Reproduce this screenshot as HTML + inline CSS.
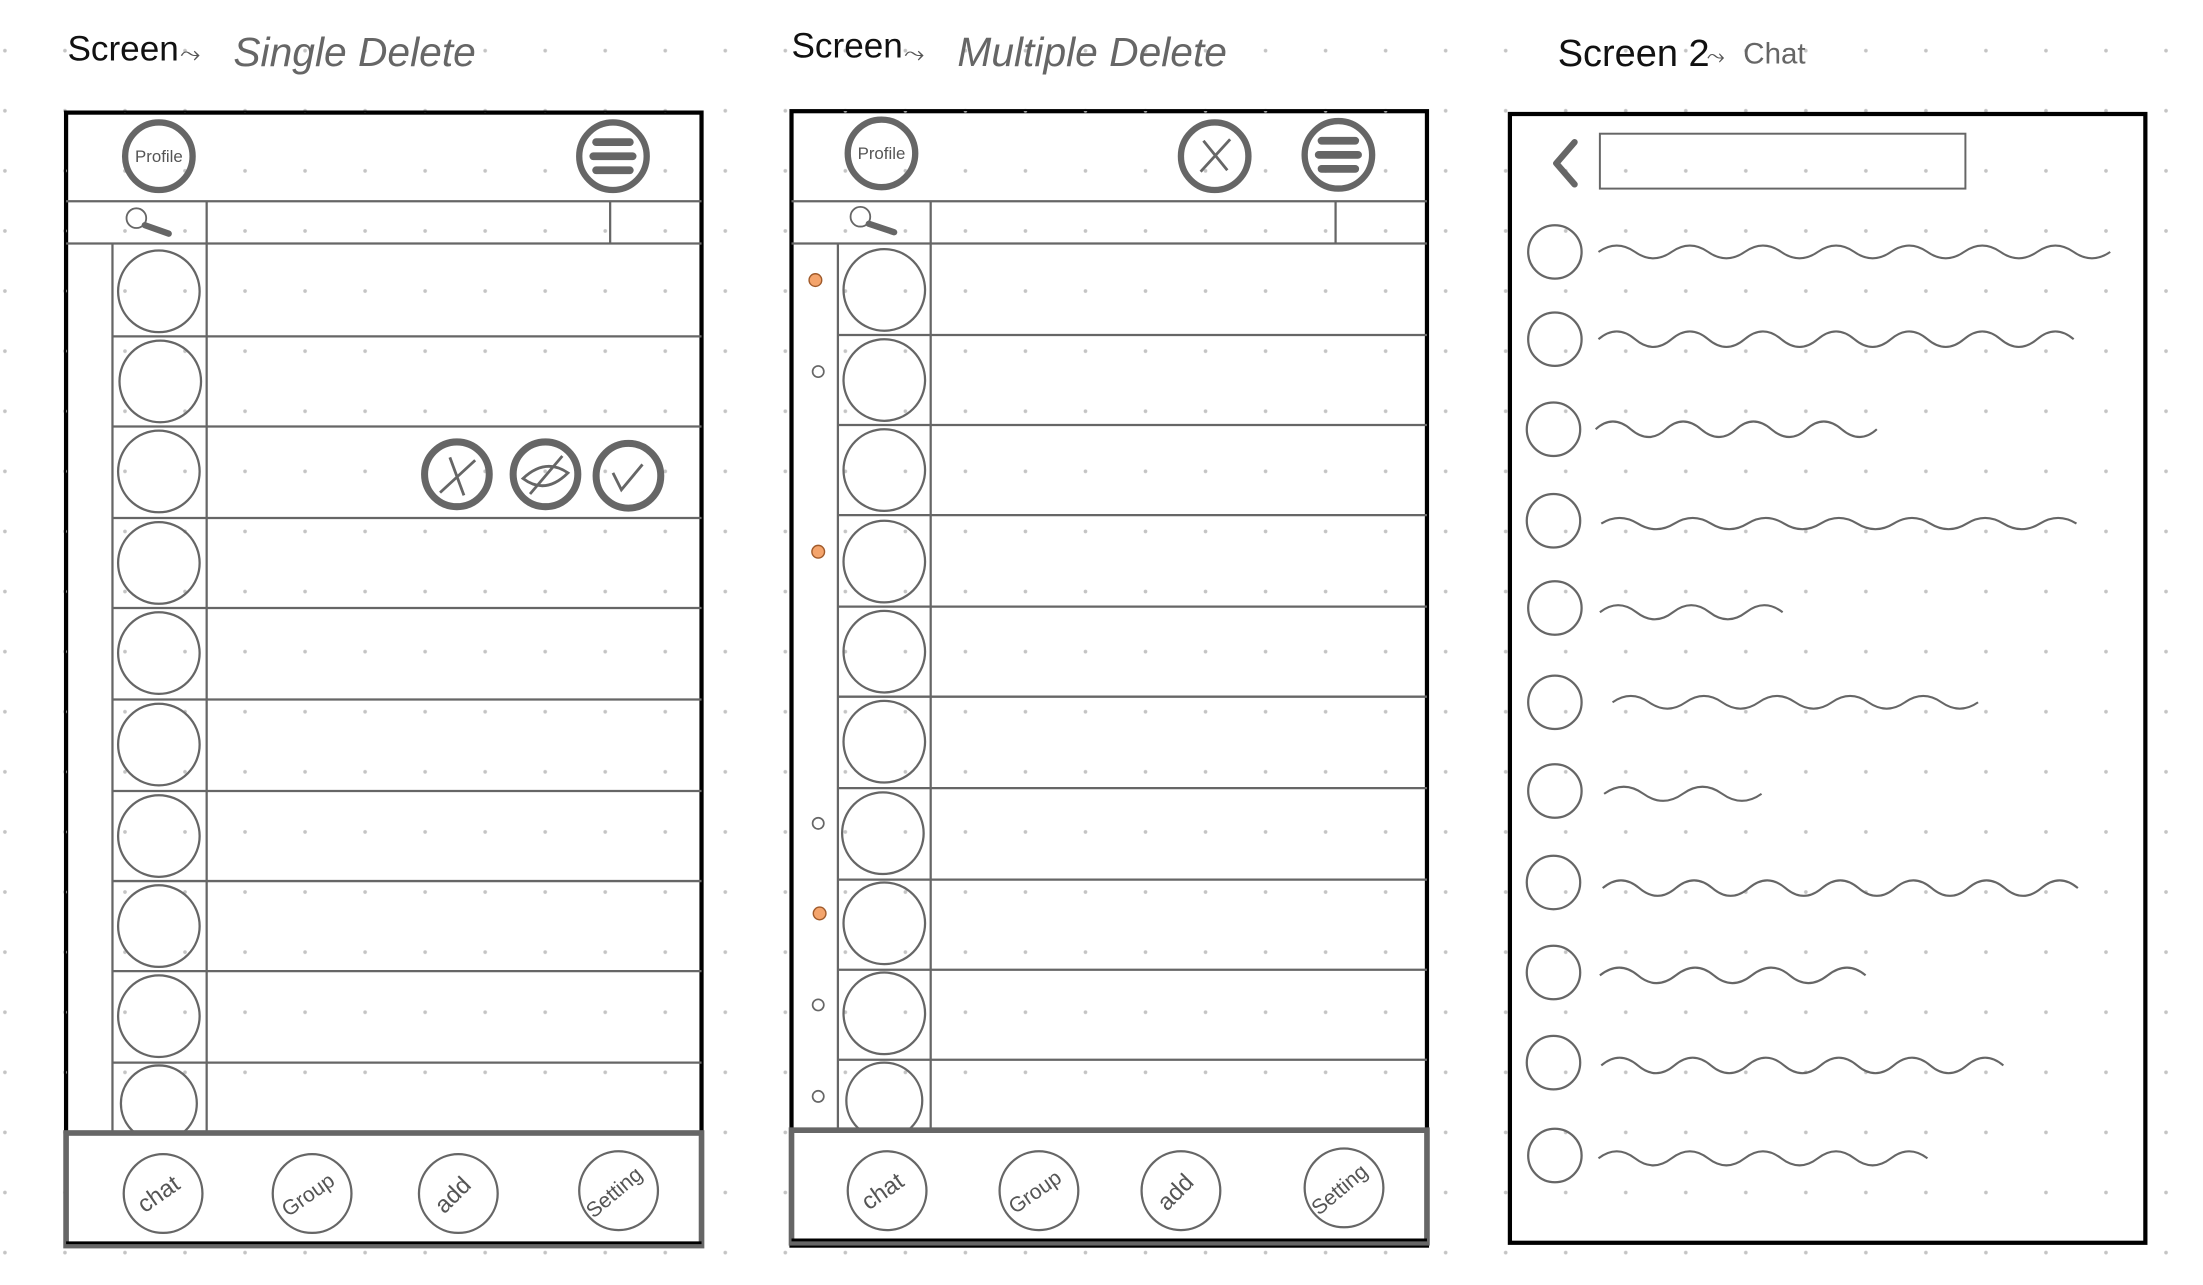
<!DOCTYPE html>
<html><head><meta charset="utf-8"><style>
html,body{margin:0;padding:0;background:#fff;width:2203px;height:1285px;overflow:hidden}
svg{display:block}
text{font-family:"Liberation Sans",sans-serif}
</style></head><body>
<svg width="2203" height="1285" viewBox="0 0 1567 913" preserveAspectRatio="none" xmlns="http://www.w3.org/2000/svg">
<defs>
<pattern id="dots" x="3.5" y="36" width="42.7" height="42.7" patternUnits="userSpaceOnUse">
<circle cx="0" cy="0" r="1.3" fill="#c4c4c4"/><circle cx="42.7" cy="0" r="1.3" fill="#c4c4c4"/><circle cx="0" cy="42.7" r="1.3" fill="#c4c4c4"/><circle cx="42.7" cy="42.7" r="1.3" fill="#c4c4c4"/>
</pattern>
</defs>
<rect width="1567" height="913" fill="url(#dots)"/>

<!-- titles -->
<text x="48" y="43" font-size="25" fill="#111">Screen</text>
<text x="128" y="44" font-size="18" fill="#555">⤳</text>
<text x="166" y="47" font-size="29" fill="#666" font-style="italic">Single Delete</text>
<text x="563" y="41" font-size="25" fill="#111">Screen</text>
<text x="643" y="44" font-size="18" fill="#555">⤳</text>
<text x="681" y="47" font-size="29" fill="#666" font-style="italic">Multiple Delete</text>
<text x="1108" y="47" font-size="27" fill="#111">Screen 2</text>
<text x="1214" y="45" font-size="16" fill="#555">⤳</text>
<text x="1240" y="45" font-size="21" fill="#666">Chat</text>

<!-- ============ SCREEN 1 ============ -->
<g fill="none" stroke="#666" stroke-width="1.6">
<rect x="47" y="80" width="452" height="805" fill="#fff" stroke="#000" stroke-width="3"/>
<rect x="47" y="80" width="452" height="805" fill="url(#dots)" stroke="none"/>
<line x1="47" y1="143" x2="499" y2="143"/>
<line x1="47" y1="173" x2="499" y2="173"/>
<line x1="147" y1="143" x2="147" y2="805"/>
<line x1="434" y1="143" x2="434" y2="173"/>
<line x1="80" y1="173" x2="80" y2="805"/>
<line x1="80" y1="239" x2="499" y2="239"/><line x1="80" y1="303" x2="499" y2="303"/><line x1="80" y1="368" x2="499" y2="368"/><line x1="80" y1="432" x2="499" y2="432"/><line x1="80" y1="497" x2="499" y2="497"/><line x1="80" y1="562" x2="499" y2="562"/><line x1="80" y1="626" x2="499" y2="626"/><line x1="80" y1="690" x2="499" y2="690"/><line x1="80" y1="755" x2="499" y2="755"/>
<circle cx="113" cy="207" r="29"/><circle cx="114" cy="271" r="29"/><circle cx="113" cy="335" r="29"/><circle cx="113" cy="400" r="29"/><circle cx="113" cy="464" r="29"/><circle cx="113" cy="529" r="29"/><circle cx="113" cy="594" r="29"/><circle cx="113" cy="658" r="29"/><circle cx="113" cy="722" r="29"/><circle cx="113" cy="784" r="27"/>
</g>
<rect x="47" y="805" width="452" height="80" fill="#fff" stroke="#666" stroke-width="4"/>
<line x1="47" y1="883" x2="499" y2="883" stroke="#000" stroke-width="2"/>
<g fill="none" stroke="#666">
<circle cx="113" cy="111" r="24" stroke-width="4.5"/>
<circle cx="436" cy="111" r="24" stroke-width="4.5"/>
<g stroke-width="5.5" stroke-linecap="round"><line x1="424" y1="101" x2="448" y2="101"/><line x1="422" y1="111" x2="450" y2="111"/><line x1="424" y1="121" x2="448" y2="121"/></g>
<circle cx="97" cy="155" r="7" stroke-width="1.3"/><line x1="103" y1="160" x2="120" y2="166" stroke-width="4.5" stroke-linecap="round"/>
<circle cx="325" cy="337" r="23" stroke-width="5"/><line x1="313" y1="350" x2="338" y2="327" stroke-width="2"/><line x1="320" y1="325" x2="330" y2="352" stroke-width="2"/>
<circle cx="388" cy="337" r="23" stroke-width="5"/><path d="M372 340 Q388 325 404 336 Q388 352 372 340Z" stroke-width="2"/><line x1="377" y1="351" x2="400" y2="324" stroke-width="2"/>
<circle cx="447" cy="338" r="23" stroke-width="5"/><path d="M436 336 L442 348 L457 330" stroke-width="2"/>
<g stroke-width="1.6"><circle cx="116" cy="848" r="28"/><circle cx="222" cy="848" r="28"/><circle cx="326" cy="848" r="28"/><circle cx="440" cy="846" r="28"/></g>
</g>
<g fill="#555" font-size="15">
<text x="113" y="115" font-size="12" text-anchor="middle">Profile</text>
<text transform="translate(116,853) rotate(-35)" text-anchor="middle" font-size="17">chat</text>
<text transform="translate(222,853) rotate(-35)" text-anchor="middle">Group</text>
<text transform="translate(326,853) rotate(-45)" text-anchor="middle" font-size="17">add</text>
<text transform="translate(440,851) rotate(-40)" text-anchor="middle">Setting</text>
</g>

<!-- ============ SCREEN 2 ============ -->
<g fill="none" stroke="#666" stroke-width="1.6">
<rect x="563" y="79" width="452" height="806" fill="#fff" stroke="#000" stroke-width="3"/>
<rect x="563" y="79" width="452" height="806" fill="url(#dots)" stroke="none"/>
<line x1="563" y1="143" x2="1015" y2="143"/>
<line x1="563" y1="173" x2="1015" y2="173"/>
<line x1="662" y1="143" x2="662" y2="803"/>
<line x1="950" y1="143" x2="950" y2="173"/>
<line x1="596" y1="173" x2="596" y2="803"/>
<line x1="596" y1="238" x2="1015" y2="238"/><line x1="596" y1="302" x2="1015" y2="302"/><line x1="596" y1="366" x2="1015" y2="366"/><line x1="596" y1="431" x2="1015" y2="431"/><line x1="596" y1="495" x2="1015" y2="495"/><line x1="596" y1="560" x2="1015" y2="560"/><line x1="596" y1="625" x2="1015" y2="625"/><line x1="596" y1="689" x2="1015" y2="689"/><line x1="596" y1="753" x2="1015" y2="753"/>
<circle cx="629" cy="206" r="29"/><circle cx="629" cy="270" r="29"/><circle cx="629" cy="334" r="29"/><circle cx="629" cy="399" r="29"/><circle cx="629" cy="463" r="29"/><circle cx="629" cy="527" r="29"/><circle cx="628" cy="592" r="29"/><circle cx="629" cy="656" r="29"/><circle cx="629" cy="720" r="29"/><circle cx="629" cy="782" r="27"/>
<g stroke-width="1.2"><circle cx="582" cy="264" r="4"/><circle cx="582" cy="585" r="4"/><circle cx="582" cy="714" r="4"/><circle cx="582" cy="779" r="4"/></g>
</g>
<g fill="#f4a46c" stroke="#a05a2a" stroke-width="1"><circle cx="580" cy="199" r="4.5"/><circle cx="582" cy="392" r="4.5"/><circle cx="583" cy="649" r="4.5"/></g>
<rect x="563" y="803" width="452" height="80" fill="#fff" stroke="#666" stroke-width="4"/>
<line x1="563" y1="881" x2="1015" y2="881" stroke="#000" stroke-width="2"/>
<g fill="none" stroke="#666">
<circle cx="627" cy="109" r="24" stroke-width="4.5"/>
<circle cx="864" cy="111" r="24" stroke-width="4.5"/><line x1="854" y1="122" x2="875" y2="99" stroke-width="2"/><line x1="856" y1="100" x2="873" y2="121" stroke-width="2"/>
<circle cx="952" cy="110" r="24" stroke-width="4.5"/>
<g stroke-width="5.5" stroke-linecap="round"><line x1="940" y1="100" x2="964" y2="100"/><line x1="938" y1="110" x2="966" y2="110"/><line x1="940" y1="120" x2="964" y2="120"/></g>
<circle cx="612" cy="154" r="7" stroke-width="1.3"/><line x1="618" y1="159" x2="636" y2="165" stroke-width="4.5" stroke-linecap="round"/>
<g stroke-width="1.6"><circle cx="631" cy="846" r="28"/><circle cx="739" cy="846" r="28"/><circle cx="840" cy="846" r="28"/><circle cx="956" cy="844" r="28"/></g>
</g>
<g fill="#555" font-size="15">
<text x="627" y="113" font-size="12" text-anchor="middle">Profile</text>
<text transform="translate(631,851) rotate(-35)" text-anchor="middle" font-size="17">chat</text>
<text transform="translate(739,851) rotate(-35)" text-anchor="middle">Group</text>
<text transform="translate(840,851) rotate(-45)" text-anchor="middle" font-size="17">add</text>
<text transform="translate(956,849) rotate(-40)" text-anchor="middle">Setting</text>
</g>

<!-- ============ SCREEN 3 ============ -->
<rect x="1074" y="81" width="452" height="802" fill="#fff" stroke="#000" stroke-width="3"/>
<rect x="1074" y="81" width="452" height="802" fill="url(#dots)"/>
<g fill="none" stroke="#666" stroke-width="1.6">
<path d="M1120 101 L1107 116 L1120 131" stroke-width="4.5" stroke-linecap="round" stroke-linejoin="round"/>
<rect x="1138" y="95" width="260" height="39" stroke-width="1.4"/>
<circle cx="1106" cy="179" r="19"/><circle cx="1106" cy="241" r="19"/><circle cx="1105" cy="305" r="19"/><circle cx="1105" cy="370" r="19"/><circle cx="1106" cy="432" r="19"/><circle cx="1106" cy="499" r="19"/><circle cx="1106" cy="562" r="19"/><circle cx="1105" cy="627" r="19"/><circle cx="1105" cy="691" r="19"/><circle cx="1105" cy="755" r="19"/><circle cx="1106" cy="821" r="19"/>
<g stroke-width="1.5">
<path d="M1137 179 q13 -9 26 0 t26 0 t26 0 t26 0 t26 0 t26 0 t26 0 t26 0 t26 0 t26 0 t26 0 t26 0 t26 0 t26 0"/>
<path d="M1137 241 q13 -11 26 0 t26 0 t26 0 t26 0 t26 0 t26 0 t26 0 t26 0 t26 0 t26 0 t26 0 t26 0 t26 0"/>
<path d="M1135 305 q12 -11 25 0 t25 0 t25 0 t25 0 t25 0 t25 0 t25 0 t25 0"/>
<path d="M1139 372 q13 -8 26 0 t26 0 t26 0 t26 0 t26 0 t26 0 t26 0 t26 0 t26 0 t26 0 t26 0 t26 0 t26 0"/>
<path d="M1138 435 q13 -10 26 0 t26 0 t26 0 t26 0 t26 0"/>
<path d="M1147 499 q13 -9 26 0 t26 0 t26 0 t26 0 t26 0 t26 0 t26 0 t26 0 t26 0 t26 0"/>
<path d="M1141 564 q14 -10 28 0 t28 0 t28 0 t28 0"/>
<path d="M1140 631 q13 -11 26 0 t26 0 t26 0 t26 0 t26 0 t26 0 t26 0 t26 0 t26 0 t26 0 t26 0 t26 0 t26 0"/>
<path d="M1138 693 q14 -11 27 0 t27 0 t27 0 t27 0 t27 0 t27 0 t27 0"/>
<path d="M1139 757 q13 -11 26 0 t26 0 t26 0 t26 0 t26 0 t26 0 t26 0 t26 0 t26 0 t26 0 t26 0"/>
<path d="M1137 823 q13 -10 26 0 t26 0 t26 0 t26 0 t26 0 t26 0 t26 0 t26 0 t26 0"/>
</g>
</g>
</svg>
</body></html>
